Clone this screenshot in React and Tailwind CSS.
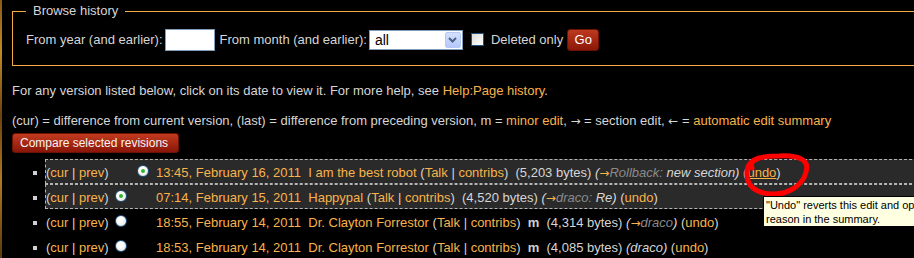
import React from 'react';

const O = 'text-[#f9b34a]';
const G = 'text-[#d6d6d6]';
const D = 'text-[#8a8a8a]';
const ARROW = "font-['DejaVu_Sans',sans-serif] not-italic text-[12px]";

function Radio({ on }) {
  return (
    <span className="inline-flex w-[12px] h-[12px] rounded-full border border-[#1c5180] bg-[radial-gradient(circle_at_40%_35%,#ffffff_30%,#dcdcd6_100%)] items-center justify-center">
      {on && <span className="w-[4px] h-[4px] rounded-full bg-[#2db52d]" />}
    </span>
  );
}

function Row({ first, second, on, selected, date, children }) {
  return (
    <div className="flex">
      <div className="w-[43px] shrink-0 pt-[12px]">
        <div className="ml-[31px] w-[4px] h-[4px] bg-[#cfcfcf]" />
      </div>
      <div
        className={
          'flex-1 flex items-start whitespace-pre h-[25px] pt-[5px] leading-[16px] border border-r-0 ' +
          (selected ? 'border-dashed border-[#b5b5b5] bg-[#2a2a2a]' : 'border-transparent')
        }
      >
        <span className={'w-[69px] shrink-0 ' + G}>
          (<span className={O}>cur</span> | <span className={O}>prev</span>)
        </span>
        <span className="w-[22px] shrink-0 flex">{first && <Radio on={on} />}</span>
        <span className="w-[19px] shrink-0 flex">{second && <Radio on={on} />}</span>
        <span className={O}>{date}</span>
        <span className={G}>{children}</span>
      </div>
    </div>
  );
}

const TC = (
  <>
    (<span className={O}>Talk</span> | <span className={O}>contribs</span>)
  </>
);

export default function App() {
  return (
    <div className="relative w-[914px] h-[258px] overflow-hidden bg-black flex font-['Liberation_Sans',Arial,sans-serif] text-[13px] text-[#d6d6d6]">
      <div className="w-[2px] shrink-0 bg-[linear-gradient(180deg,#8a5a14,#c08a2a_20%,#6b4210_45%,#b07820_70%,#5a3a10)]" />
      <div className="flex-1 pl-[10px]">
        <fieldset className="mt-[3px] w-[940px] border border-r-0 border-[#f5ac42] pl-[13px] pt-[10px] pb-[14px]">
          <legend className="px-[7px] leading-[16px] text-[#d6d6d6]">Browse history</legend>
          <div className="flex items-center h-[22px] whitespace-nowrap">
            <span>From year (and earlier):</span>
            <span className="ml-[2px] w-[50px] h-[22px] bg-white border border-[#7f9db9]" />
            <span className="ml-[5px]">From month (and earlier):</span>
            <span className="ml-[2px] w-[94px] h-[20px] bg-white border border-[#7f9db9] flex items-center justify-between">
              <span className="pl-[5px] text-black text-[14px]">all</span>
              <span className="mr-[1px] w-[16px] h-[16px] rounded-[2px] border border-[#b6c9f5] bg-[linear-gradient(180deg,#d4e0fd,#b4c8f9)] flex items-center justify-center">
                <svg width="9" height="6" viewBox="0 0 9 6">
                  <path d="M1 1 L4.5 4.5 L8 1" fill="none" stroke="#4d6185" strokeWidth="2" />
                </svg>
              </span>
            </span>
            <span className="ml-[8px] w-[13px] h-[13px] border border-[#1c5180] bg-[linear-gradient(135deg,#dcdcd7,#ffffff)] mb-[1px]" />
            <span className="ml-[7px]">Deleted only</span>
            <span className="ml-[4px] w-[32px] h-[22px] rounded-[3px] border border-[#6e1206] bg-[linear-gradient(180deg,#bd3a1e,#8c1709)] text-white flex items-center justify-center">
              Go
            </span>
          </div>
        </fieldset>

        <p className="mt-[15px] leading-[20px] whitespace-nowrap">
          For any version listed below, click on its date to view it. For more help, see{' '}
          <span className={O}>Help:Page history</span>.
        </p>
        <p className="mt-[10px] leading-[20px] whitespace-nowrap">
          (cur) = difference from current version, (last) = difference from preceding version, m ={' '}
          <span className={O}>minor edit</span>, <span className={ARROW}>→</span> = section edit,{' '}
          <span className={ARROW}>←</span> = <span className={O}>automatic edit summary</span>
        </p>
        <button className="mt-[2px] h-[20px] w-[167px] rounded-[3px] border border-[#6e1206] bg-[linear-gradient(180deg,#c23b1f,#8a1608)] text-[#f3f3f3] text-[12px] leading-[18px] text-left pl-[7px] whitespace-nowrap">
          Compare selected revisions
        </button>

        <div className="mt-[6px] -ml-[10px]">
          <Row second on selected date="13:45, February 16, 2011">
            {'  '}<span className={O}>I am the best robot</span> {TC}{'  '}(5,203 bytes){' '}
            <span className="italic">
              (<span className={O + ' ' + ARROW}>→</span><span className={D}>Rollback:</span> new section)
            </span>{' '}
            (<span className={O + ' underline'}>undo</span>)
          </Row>
          <Row first on selected date="07:14, February 15, 2011">
            {'  '}<span className={O}>Happypal</span> {TC}{'  '}(4,520 bytes){' '}
            <span className="italic">
              (<span className={O + ' ' + ARROW}>→</span><span className={D}>draco:</span> Re)
            </span>{' '}
            (<span className={O}>undo</span>)
          </Row>
          <Row first date="18:55, February 14, 2011">
            {'  '}<span className={O}>Dr. Clayton Forrestor</span> {TC}{'  '}
            <b className="text-[#cfcfcf]">m</b>{'  '}(4,314 bytes){' '}
            <span className="italic">
              (<span className={O + ' ' + ARROW}>→</span><span className={D}>draco</span>)
            </span>{' '}
            (<span className={O}>undo</span>)
          </Row>
          <Row first date="18:53, February 14, 2011">
            {'  '}<span className={O}>Dr. Clayton Forrestor</span> {TC}{'  '}
            <b className="text-[#cfcfcf]">m</b>{'  '}(4,085 bytes){' '}
            <span className="italic">(draco)</span>{' '}
            (<span className={O}>undo</span>)
          </Row>
        </div>
      </div>

      <svg className="absolute left-[740px] top-[150px]" width="74" height="50" viewBox="0 0 74 50">
        <path
          d="M12 18 C8 8, 24 6, 39 6 C59 5, 70 10, 66 22 C63 35, 49 44, 34 44 C16 44, 6 36, 7 22 C7 15, 12 10, 19 8"
          fill="none"
          stroke="#ff0000"
          strokeWidth="5"
          strokeLinecap="round"
        />
      </svg>

      <div className="absolute left-[763px] top-[196px] w-[170px] h-[31px] bg-[#ffffe1] border border-black pl-[2px] pt-[1px] text-black text-[11px] leading-[14px] whitespace-nowrap">
        <div>"Undo" reverts this edit and opens the edit form</div>
        <div>reason in the summary.</div>
      </div>
    </div>
  );
}
